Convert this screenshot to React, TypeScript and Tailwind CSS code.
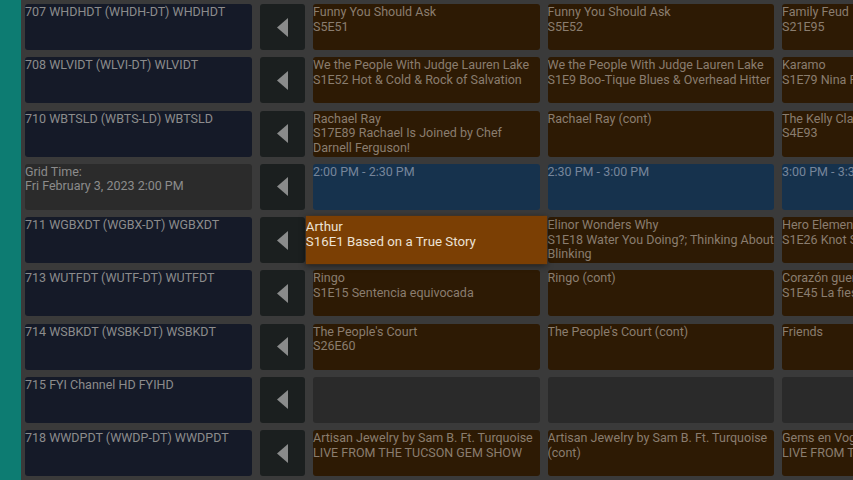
type Prog = { lines: string[]; kind?: "show" | "time" | "empty" };

interface Row {
    channel: string[];
    channelKind?: "channel" | "time";
    progs: Prog[];
    focus?: number;
}

const rows: Row[] = [
    {
        channel: ["707 WHDHDT (WHDH-DT) WHDHDT"],
        progs: [
            { lines: ["Funny You Should Ask", "S5E51"] },
            { lines: ["Funny You Should Ask", "S5E52"] },
            { lines: ["Family Feud", "S21E95"] },
        ],
    },
    {
        channel: ["708 WLVIDT (WLVI-DT) WLVIDT"],
        progs: [
            { lines: ["We the People With Judge Lauren Lake", "S1E52 Hot & Cold & Rock of Salvation"] },
            { lines: ["We the People With Judge Lauren Lake", "S1E9 Boo-Tique Blues & Overhead Hitter"] },
            { lines: ["Karamo", "S1E79 Nina Fights Fiancé Fat Shaming"] },
        ],
    },
    {
        channel: ["710 WBTSLD (WBTS-LD) WBTSLD"],
        progs: [
            { lines: ["Rachael Ray", "S17E89 Rachael Is Joined by Chef Darnell Ferguson!"] },
            { lines: ["Rachael Ray (cont)"] },
            { lines: ["The Kelly Clarkson Show", "S4E93"] },
        ],
    },
    {
        channel: ["Grid Time:", "Fri February 3, 2023 2:00 PM"],
        channelKind: "time",
        progs: [
            { lines: ["2:00 PM - 2:30 PM"], kind: "time" },
            { lines: ["2:30 PM - 3:00 PM"], kind: "time" },
            { lines: ["3:00 PM - 3:30 PM"], kind: "time" },
        ],
    },
    {
        channel: ["711 WGBXDT (WGBX-DT) WGBXDT"],
        focus: 0,
        progs: [
            { lines: ["Arthur", "S16E1 Based on a True Story"] },
            { lines: ["Elinor Wonders Why", "S1E18 Water You Doing?; Thinking About Blinking"] },
            { lines: ["Hero Elementary", "S1E26 Knot Science"] },
        ],
    },
    {
        channel: ["713 WUTFDT (WUTF-DT) WUTFDT"],
        progs: [
            { lines: ["Ringo", "S1E15 Sentencia equivocada"] },
            { lines: ["Ringo (cont)"] },
            { lines: ["Corazón guerrero", "S1E45 La fiesta"] },
        ],
    },
    {
        channel: ["714 WSBKDT (WSBK-DT) WSBKDT"],
        progs: [
            { lines: ["The People's Court", "S26E60"] },
            { lines: ["The People's Court (cont)"] },
            { lines: ["Friends"] },
        ],
    },
    {
        channel: ["715 FYI Channel HD FYIHD"],
        progs: [
            { lines: [], kind: "empty" },
            { lines: [], kind: "empty" },
            { lines: [], kind: "empty" },
        ],
    },
    {
        channel: ["718 WWDPDT (WWDP-DT) WWDPDT"],
        progs: [
            { lines: ["Artisan Jewelry by Sam B. Ft. Turquoise", "LIVE FROM THE TUCSON GEM SHOW"] },
            { lines: ["Artisan Jewelry by Sam B. Ft. Turquoise", "(cont)"] },
            { lines: ["Gems en Vogue Gemstones", "LIVE FROM THE TUCSON GEM SHOW"] },
        ],
    },
];

function LeftArrow() {
    return (
        <div className="w-[45px] h-full shrink-0 rounded-[3px] bg-[#1b1f1f] flex items-center justify-center">
            <svg width="11" height="19" viewBox="0 0 11 19">
                <polygon points="11,0 11,19 0,9.5" fill="#8a8b8b" />
            </svg>
        </div>
    );
}

function ProgCell({ prog, focused }: { prog: Prog; focused: boolean }) {
    if (focused) {
        return (
            <div className="w-[226.5px] h-full shrink-0 relative z-10 scale-x-[1.063] scale-y-[1.05] bg-[#7b3f04] shadow-[0_2px_6px_rgba(0,0,0,0.5)] text-[#ece2d6] text-[12.5px] leading-[15px] pt-[2px] overflow-hidden">
                {prog.lines.map((l, i) => (
                    <div key={i} className="whitespace-nowrap">{l}</div>
                ))}
            </div>
        );
    }
    const bg =
        prog.kind === "time" ? "bg-[#16324d] text-[#76859a]" : prog.kind === "empty" ? "bg-[#2a2a2a]" : "bg-[#2d1a04] text-[#8a7d6f]";
    return (
        <div className={`w-[226.5px] h-full shrink-0 rounded-[3px] overflow-hidden pt-[1px] ${bg}`}>
            {prog.lines.map((l, i) => (
                <div key={i}>{l}</div>
            ))}
        </div>
    );
}

export default function App() {
    return (
        <div
            className="w-[853px] h-[480px] overflow-hidden bg-[#3a3a3a] flex text-[12.5px] leading-[14.5px]"
            style={{ fontFamily: "Roboto, 'Noto Sans', sans-serif" }}
        >
            {/* side strip */}
            <div className="w-[21px] shrink-0 bg-[#0d7c72]"></div>

            <div className="flex-1 flex flex-col gap-[7.25px] pt-[4px] pl-[4px] min-w-0">
                {rows.map((row, r) => (
                    <div key={r} className="h-[46px] shrink-0 flex gap-[8px]">
                        <div
                            className={`w-[227px] h-full shrink-0 rounded-[3px] pt-[1px] text-[#8c8c8c] ${row.channelKind === "time" ? "bg-[#2b2b2b]" : "bg-[#151a28]"}`}
                        >
                            {row.channel.map((c, i) => (
                                <div key={i} className="whitespace-nowrap">{c}</div>
                            ))}
                        </div>
                        <LeftArrow />
                        {row.progs.map((p, i) => (
                            <ProgCell key={i} prog={p} focused={row.focus === i} />
                        ))}
                    </div>
                ))}
            </div>
        </div>
    );
}
